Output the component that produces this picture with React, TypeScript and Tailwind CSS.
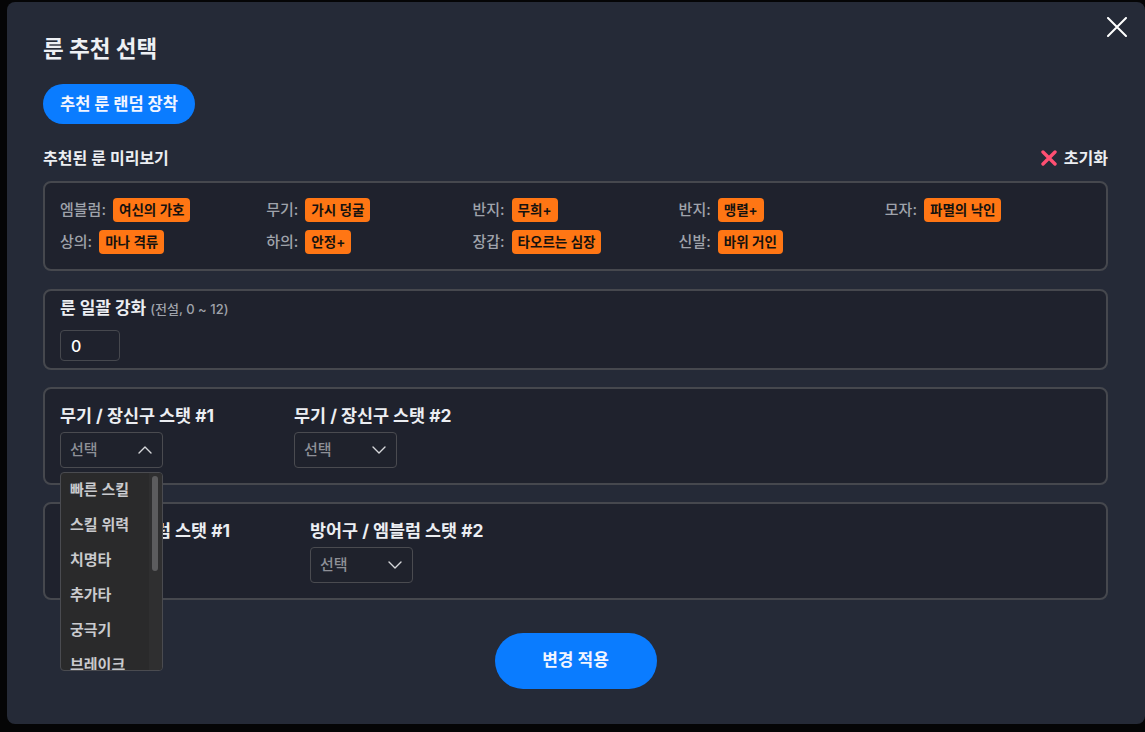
import { ChevronDown, ChevronUp } from "lucide-react";

type Rune = { slot: string; name: string };

const RUNES: Rune[] = [
  { slot: "엠블럼", name: "여신의 가호" },
  { slot: "무기", name: "가시 덩굴" },
  { slot: "반지", name: "무희+" },
  { slot: "반지", name: "맹렬+" },
  { slot: "모자", name: "파멸의 낙인" },
  { slot: "상의", name: "마나 격류" },
  { slot: "하의", name: "안정+" },
  { slot: "장갑", name: "타오르는 심장" },
  { slot: "신발", name: "바위 거인" },
];

const STAT_OPTIONS = ["빠른 스킬", "스킬 위력", "치명타", "추가타", "궁극기", "브레이크"];

const FONT = "font-['Inter','Noto_Sans_CJK_KR',sans-serif]";

function SelectBox({ open }: { open?: boolean }) {
  return (
    <div className="relative">
      <div className="flex h-[36px] w-[103px] items-center justify-between rounded border border-[#4a4b50] bg-[#1f222c] pl-[9px] pr-[5px] text-[15px] font-medium text-[#8e9097]">
        <span>선택</span>
        {open ? (
          <ChevronUp size={24} strokeWidth={1.4} className="text-[#d6d7da]" />
        ) : (
          <ChevronDown size={24} strokeWidth={1.4} className="text-[#d6d7da]" />
        )}
      </div>
      {open && (
        <div className="absolute left-0 top-[40px] z-20 flex h-[199px] w-[103px] overflow-hidden rounded border border-[#4a4b50] bg-[#2a2a2b]">
          <ul className="flex-1">
            {STAT_OPTIONS.map((o) => (
              <li
                key={o}
                className="flex h-[35px] items-center pl-[9px] text-[15px] font-semibold text-[#c9cace]"
              >
                {o}
              </li>
            ))}
          </ul>
          <div className="w-[13px] bg-[#2f2f30] pl-[3px] pt-[3px]">
            <div className="h-[95px] w-[6px] rounded-full bg-[#5c5c5e]" />
          </div>
        </div>
      )}
    </div>
  );
}

function StatField({ label, open }: { label: string; open?: boolean }) {
  return (
    <div className="flex flex-col gap-[6px]">
      <span className="text-[17.4px] font-bold leading-[20px] text-[#eceef2]">{label}</span>
      <SelectBox open={open} />
    </div>
  );
}

export default function App() {
  return (
    <div className={`h-[732px] w-full overflow-hidden bg-[#050506] pl-[7px] pt-[2px] ${FONT}`}>
      <div className="relative h-[722px] w-[1138px] rounded-lg bg-[#252a37] pl-[36px] pt-[35px]">
        <button type="button" className="absolute right-[18px] top-[15px] text-white">
          <svg width="20" height="20" viewBox="0 0 20 20" fill="none" stroke="currentColor" strokeWidth="2" strokeLinecap="round">
            <path d="M1 1 L19 19 M19 1 L1 19" />
          </svg>
        </button>

        <h1 className="text-[22.5px] font-bold leading-[24px] text-[#eef0f4]">룬 추천 선택</h1>

        <div className="mt-[23px] flex">
          <button
            type="button"
            className="h-[40px] rounded-full bg-[#0a7cff] px-[17px] text-[16.5px] font-bold text-[#f2f5ff]"
          >
            추천 룬 랜덤 장착
          </button>
        </div>

        <div className="mt-[24px] flex h-[20px] w-[1065px] items-center justify-between">
          <span className="text-[16px] font-semibold leading-[20px] text-[#eceef2]">추천된 룬 미리보기</span>
          <button type="button" className="flex items-center gap-[7px] text-[16px] font-bold leading-[20px] text-[#eceef2]">
            <svg width="16" height="16" viewBox="0 0 16 16" fill="none" stroke="#ff4f72" strokeWidth="3.4" strokeLinecap="round">
              <path d="M2 2 L14 14 M14 2 L2 14" />
            </svg>
            초기화
          </button>
        </div>

        <div className="mt-[13px] flex w-[1065px] flex-col gap-[8px] rounded-lg border-2 border-[#46484e] bg-[#1f222d] px-[15px] py-[15px]">
          {[RUNES.slice(0, 5), RUNES.slice(5)].map((row, i) => (
            <div key={i} className="grid h-[24px] grid-cols-5">
              {row.map((r, j) => (
                <div key={j} className="flex items-center gap-[7px]">
                  <span className="text-[15px] font-medium text-[#9fa3ab]">{r.slot}:</span>
                  <span className="flex h-[24px] items-center rounded bg-[#ff7614] px-[6px] text-[13.5px] font-semibold text-[#15120f]">
                    {r.name}
                  </span>
                </div>
              ))}
            </div>
          ))}
        </div>

        <div className="mt-[18px] w-[1065px] rounded-lg border-2 border-[#46484e] bg-[#1f222d] px-[15px] pb-[7px] pt-[7px]">
          <div className="flex h-[20px] items-baseline gap-[4px]">
            <span className="text-[17px] font-bold leading-[20px] text-[#eceef2]">룬 일괄 강화</span>
            <span className="text-[13px] font-medium leading-[20px] text-[#9fa3ab]">(전설, 0 ~ 12)</span>
          </div>
          <div className="mt-[12px] flex h-[31px] w-[60px] items-center rounded border border-[#46484e] pl-[10px] text-[16px] font-medium text-white">
            0
          </div>
        </div>

        <div className="relative z-10 mt-[17px] w-[1065px] rounded-lg border-2 border-[#46484e] bg-[#1f222d] px-[15px] pb-[15px] pt-[17px]">
          <div className="flex gap-[80px]">
            <StatField label="무기 / 장신구 스탯 #1" open />
            <StatField label="무기 / 장신구 스탯 #2" />
          </div>
        </div>

        <div className="mt-[17px] w-[1065px] rounded-lg border-2 border-[#46484e] bg-[#1f222d] px-[15px] pb-[15px] pt-[17px]">
          <div className="flex gap-[80px]">
            <StatField label="방어구 / 엠블럼 스탯 #1" />
            <StatField label="방어구 / 엠블럼 스탯 #2" />
          </div>
        </div>

        <div className="mt-[33px] flex w-[1065px] justify-center">
          <button
            type="button"
            className="h-[56px] w-[162px] rounded-full bg-[#0a7cff] text-[17px] font-bold text-[#f2f5ff]"
          >
            변경 적용
          </button>
        </div>
      </div>
    </div>
  );
}
